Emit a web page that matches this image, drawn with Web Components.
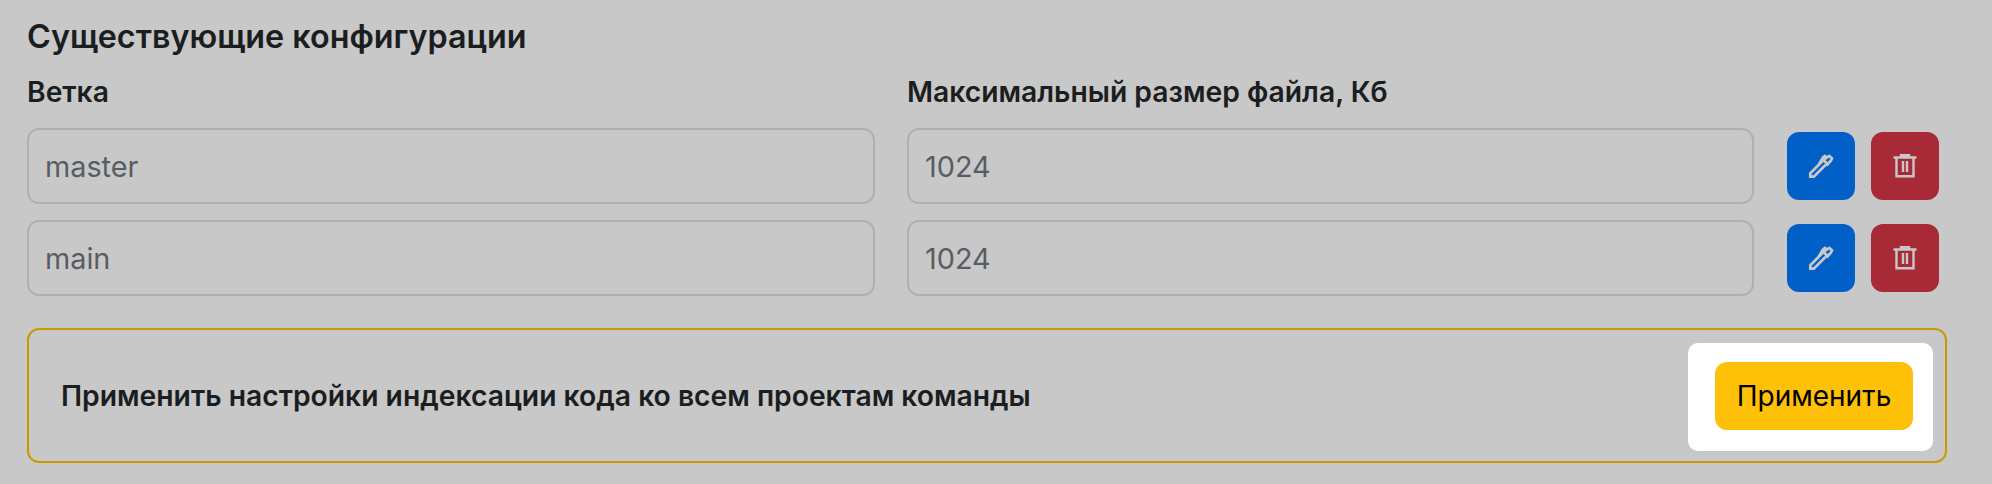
<!DOCTYPE html>
<html>
<head>
<meta charset="utf-8">
<style>
html, body { margin: 0; background: #c8c8c8; }
body { font-family: Inter, "Liberation Sans", sans-serif; color: #1b1e21; }
</style>
</head>
<body>
<config-page>
  <span slot="title">Существующие конфигурации</span>
  <span slot="branch">Ветка</span>
  <span slot="size">Максимальный размер файла, Кб</span>
  <config-row slot="rows" branch="master" size="1024"></config-row>
  <config-row slot="rows" branch="main" size="1024"></config-row>
  <apply-banner slot="banner">Применить настройки индексации кода ко всем проектам команды</apply-banner>
</config-page>
<script>
const pageTemplate = document.createElement('template')
pageTemplate.innerHTML = `<style>
  :host { display: block; box-sizing: border-box; width: 1992px; height: 484px; padding: 18px 45px 0 27px; overflow: hidden; }
  h2 { margin: 0; font-size: 32.3px; line-height: 38px; font-weight: 600; }
  .labels { display: grid; grid-template-columns: 848px 847px; column-gap: 32px; margin-top: 20px; font-size: 28.27px; line-height: 32px; font-weight: 600; }
  .rows { display: flex; flex-direction: column; gap: 16px; margin-top: 20px; }
  .banner { margin-top: 32px; }
</style>
<h2><slot name="title"></slot></h2>
<div class="labels"><div><slot name="branch"></slot></div><div><slot name="size"></slot></div></div>
<div class="rows"><slot name="rows"></slot></div>
<div class="banner"><slot name="banner"></slot></div>`

class ConfigPage extends HTMLElement {
  constructor() {
    super()
    this.attachShadow({mode: 'open'})
    this.shadowRoot.appendChild(pageTemplate.content.cloneNode(true))
  }
}

const rowTemplate = document.createElement('template')
rowTemplate.innerHTML = `<style>
  :host { display: grid; grid-template-columns: 848px 847px auto; column-gap: 32px; align-items: center; }
  .field { box-sizing: border-box; height: 76px; border: 2px solid #adb1b6; border-radius: 12px; padding: 0 16px; display: flex; align-items: center; font-size: 28.8px; color: #575d64; }
  .actions { display: flex; gap: 16px; margin-left: 1px; }
  .btn { width: 68px; height: 68px; border-radius: 12px; display: flex; align-items: center; justify-content: center; }
  .edit { background: #0060c8; }
  .del { background: #a82a36; }
  svg { display: block; width: 24px; height: 24px; fill: none; stroke: #c8c8c8; stroke-width: 2.400; overflow: visible; }
  .pen { stroke-width: 2.700; }
</style>
<div class="field" id="branch"></div>
<div class="field" id="size"></div>
<div class="actions">
  <div class="btn edit"><svg class="pen" viewBox="0 0 24 24"><path d="M1.300 22.700v-3.500L14.500 6l3.500 3.500L4.800 22.700zM9.500 11l4.500-7.500 2-1.500 2 1.500 2.200-1.500 2.800 2.300-1 2.200-4.500 5M14.500 6L18 3.500"/></svg></div>
  <div class="btn del"><svg viewBox="0 0 24 24"><path d="M0.500 3.500H23.500M8 3.500V1.200H16V3.500M3.500 3.500V22.300H20.500V3.500M10 7V18M14 7V18"/></svg></div>
</div>`

class ConfigRow extends HTMLElement {
  constructor() {
    super()
    this.attachShadow({mode: 'open'})
    this.shadowRoot.appendChild(rowTemplate.content.cloneNode(true))
  }
  connectedCallback() {
    this.shadowRoot.querySelector('#branch').innerText = this.getAttribute('branch')
    this.shadowRoot.querySelector('#size').innerText = this.getAttribute('size')
  }
}

const bannerTemplate = document.createElement('template')
bannerTemplate.innerHTML = `<style>
  :host { display: flex; box-sizing: border-box; width: 1920px; height: 135px; border: 2px solid #c99a00; border-radius: 12px; align-items: center; justify-content: space-between; padding: 0 12px 0 32px; font-size: 28.27px; font-weight: 600; }
  .spot { background: #fff; border-radius: 10px; margin-top: 3px; padding: 19px 20px 21px 27px; display: flex; }
  .apply { box-sizing: border-box; width: 198px; height: 68px; border-radius: 12px; background: #ffc107; color: #000; font-size: 28px; font-weight: 400; display: flex; align-items: center; justify-content: center; }
</style>
<div><slot></slot></div>
<div class="spot"><div class="apply">Применить</div></div>`

class ApplyBanner extends HTMLElement {
  constructor() {
    super()
    this.attachShadow({mode: 'open'})
    this.shadowRoot.appendChild(bannerTemplate.content.cloneNode(true))
  }
}

window.customElements.define('config-page', ConfigPage)
window.customElements.define('config-row', ConfigRow)
window.customElements.define('apply-banner', ApplyBanner)
</script>
</body>
</html>
